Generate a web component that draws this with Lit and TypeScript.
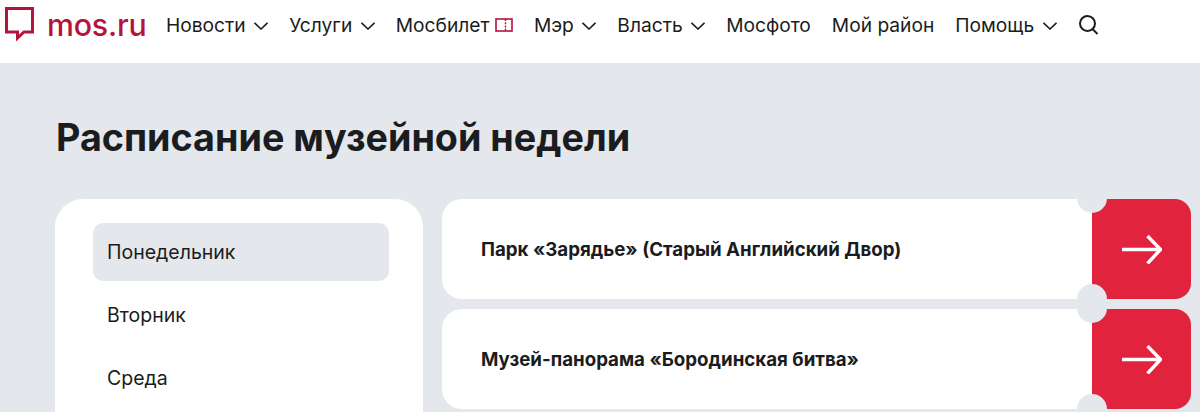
import { LitElement, html, css, svg } from 'lit';
import { customElement } from 'lit/decorators.js';

const chevron = html`<svg class="chevron" width="14" height="8" viewBox="0 0 14 8" fill="none"><path d="M.5.8L7 7l6.500-6.200" stroke="#1a1c20" stroke-width="1.6"/></svg>`;

const ticket = html`<svg class="ticket" width="18" height="14" viewBox="0 0 18 14" fill="none">
  <rect x="1" y="1" width="16" height="12" stroke="#b5133c" stroke-width="1.6"/>
  <path d="M10.5 1v12" stroke="#b5133c" stroke-width="1.4" stroke-dasharray="2 1.2"/>
</svg>`;

const arrow = svg`<path d="M0 14.5h38.5M25.5 1l13 13.5-13 14" stroke="#fff" stroke-width="3.4" fill="none"/>`;

const navItems = [
  { label: 'Новости', caret: true },
  { label: 'Услуги', caret: true },
  { label: 'Мосбилет', ticket: true },
  { label: 'Мэр', caret: true },
  { label: 'Власть', caret: true },
  { label: 'Мосфото' },
  { label: 'Мой район' },
  { label: 'Помощь', caret: true },
];

const days = ['Понедельник', 'Вторник', 'Среда'];
const places = ['Парк «Зарядье» (Старый Английский Двор)', 'Музей-панорама «Бородинская битва»'];

@customElement('app-root')
export class AppRoot extends LitElement {
  static styles = css`
    :host {
      display: block;
      height: 412px;
      overflow: hidden;
      background: #e4e7ec;
      color: #1a1c20;
      font-family: Inter, "Noto Sans", sans-serif;
    }

    header {
      display: flex;
      align-items: flex-start;
      height: 63px;
      padding-left: 5px;
      background: #fff;
    }

    .logo {
      display: flex;
      align-items: flex-start;
      gap: 13px;
      margin-right: 19.5px;
      padding-top: 7px;
      color: #b5133c;
      font-size: 30.3px;
      font-weight: 550;
      letter-spacing: -0.2px;
      line-height: 36px;
    }

    .logo svg {
      display: block;
    }

    nav {
      display: flex;
      align-items: center;
      gap: 21px;
      height: 50px;
      font-size: 19.2px;
    }

    .nav-item {
      display: flex;
      align-items: center;
      gap: 8.5px;
      white-space: nowrap;
    }

    .chevron {
      margin-top: 1px;
    }

    .ticket {
      margin-left: -3px;
    }

    main {
      padding: 52px 9px 0 55px;
    }

    h1 {
      margin: 0 0 40px 1px;
      font-size: 37.7px;
      line-height: 44px;
      font-weight: 700;
      white-space: nowrap;
    }

    .schedule {
      display: grid;
      grid-template-columns: 368px 1fr;
      align-items: start;
      gap: 19px;
    }

    .days {
      display: flex;
      flex-direction: column;
      gap: 5px;
      padding: 24px 34px 40px 38px;
      background: #fff;
      border-radius: 28px;
    }

    .day {
      display: flex;
      align-items: center;
      height: 58px;
      padding-left: 14px;
      border-radius: 10px;
      font-size: 19.5px;
    }

    .day.active {
      background: #e4e7ec;
    }

    .places {
      display: flex;
      flex-direction: column;
      gap: 10px;
    }

    .place {
      position: relative;
      display: flex;
      height: 100px;
    }

    .place-name {
      flex: 1;
      display: flex;
      align-items: center;
      padding-left: 39px;
      background: #fff;
      border-radius: 20px 0 0 20px;
      font-size: 18.7px;
      font-weight: 700;
    }

    .go {
      display: flex;
      align-items: center;
      justify-content: center;
      width: 99px;
      background: #e1233d;
      border-radius: 0 16px 16px 0;
    }

    .notch {
      position: absolute;
      right: 84px;
      width: 30px;
      height: 30px;
      border-radius: 50%;
      background: #e4e7ec;
    }

    .notch.top {
      top: -16px;
    }

    .notch.bottom {
      bottom: -15px;
    }
  `;

  render() {
    return html`
      <header>
        <div class="logo">
          <svg width="29" height="35" viewBox="0 0 29 35" fill="none">
            <path d="M1.500 1.500h26V25H19L12.500 31V25H1.500z" stroke="#b5133c" stroke-width="3"/>
          </svg>
          <span>mos.ru</span>
        </div>
        <nav>
          ${navItems.map(
            (item) => html`<div class="nav-item">
              ${item.label}${item.caret ? chevron : ''}${item.ticket ? ticket : ''}
            </div>`
          )}
          <svg width="22" height="22" viewBox="0 0 22 22" fill="none">
            <circle cx="9.5" cy="9.5" r="7.5" stroke="#1a1c20" stroke-width="2"/>
            <path d="M14.5 15l5 5" stroke="#1a1c20" stroke-width="2"/>
          </svg>
        </nav>
      </header>
      <main>
        <h1>Расписание музейной недели</h1>
        <div class="schedule">
          <div class="days">
            ${days.map((day, i) => html`<div class="day ${i === 0 ? 'active' : ''}">${day}</div>`)}
          </div>
          <div class="places">
            ${places.map(
              (place) => html`<div class="place">
                <div class="place-name">${place}</div>
                <div class="go">
                  <svg width="40" height="29" viewBox="0 0 40 29">${arrow}</svg>
                </div>
                <span class="notch top"></span>
                <span class="notch bottom"></span>
              </div>`
            )}
          </div>
        </div>
      </main>
    `;
  }
}
